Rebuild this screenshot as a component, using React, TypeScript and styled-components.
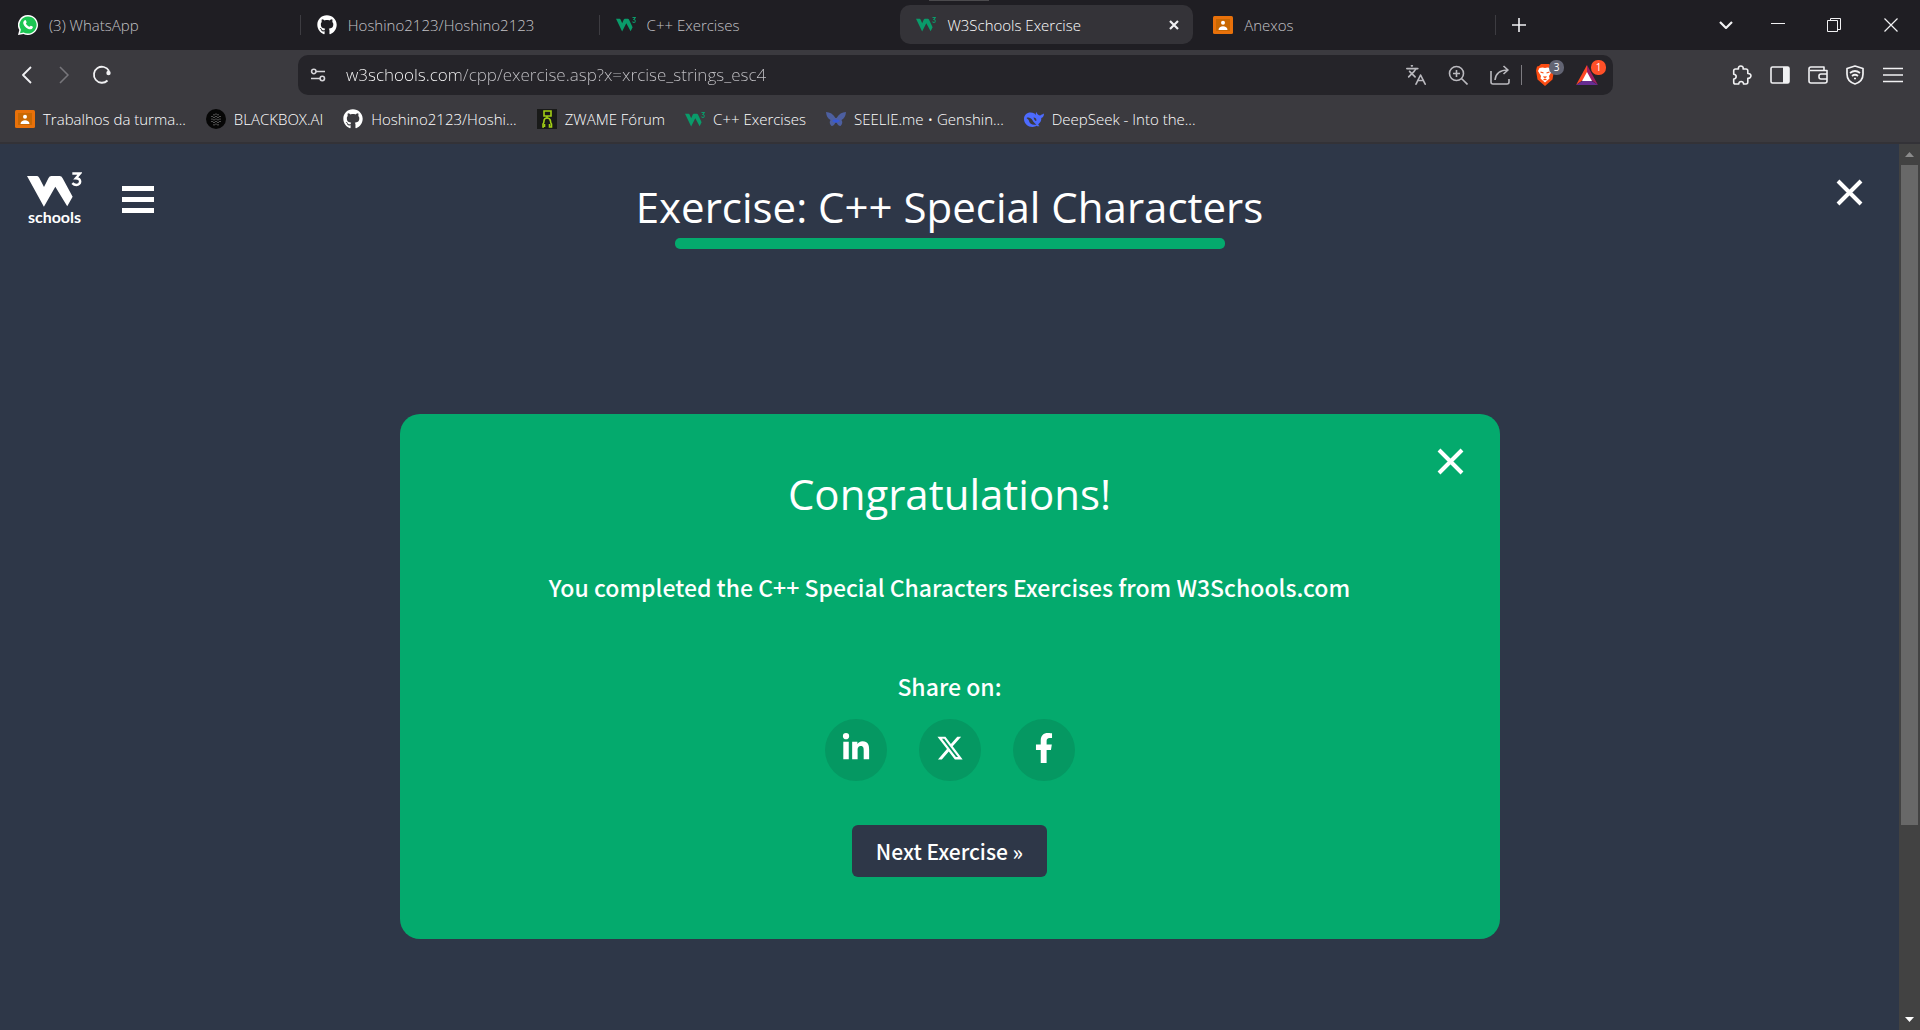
import React from "react";
import styled, { createGlobalStyle, css } from "styled-components";
import { FaLinkedinIn, FaFacebookF, FaGithub } from "react-icons/fa";
import { FaXTwitter } from "react-icons/fa6";
import { Languages } from "lucide-react";

const ui = `"Open Sans", "Noto Sans", sans-serif`;
const source = `"Noto Sans CJK JP", "Open Sans", sans-serif`;

const GlobalStyle = createGlobalStyle`
  *, *::before, *::after { box-sizing: border-box; }
  body { margin: 0; background: #2e3748; font-family: ${ui}; color: #fff; }
  button { border: 0; margin: 0; padding: 0; background: none; color: inherit; font: inherit; cursor: pointer; }
  a { color: inherit; text-decoration: none; }
  svg { display: block; flex: none; }
`;

const Window = styled.div`
  display: flex;
  flex-direction: column;
  height: 100vh;
  overflow: hidden;
`;

/* ---------- Tab strip ---------- */

const TabStrip = styled.nav`
  position: relative;
  display: flex;
  align-items: center;
  height: 50px;
  flex: none;
  padding-bottom: 1px;
  background: #1f1e23;
`;

const DragHandle = styled.span`
  position: absolute;
  top: 0;
  left: 929px;
  width: 60px;
  height: 1px;
  background: #4b4a4d;
`;

const Tabs = styled.div`
  display: grid;
  grid-template-columns: repeat(5, minmax(0, 1fr));
  flex: 0 1 1496px;
  min-width: 0;
  padding-left: 2px;
`;

const Tab = styled.div<{ $active?: boolean; $divided?: boolean }>`
  display: flex;
  align-items: center;
  min-width: 0;
  height: 39px;
  padding: 0 14px 0 16px;
  color: #c3c2c6;
  ${(p) =>
    p.$divided &&
    css`
      background: linear-gradient(#3d3c41, #3d3c41) right center / 1px 20px no-repeat;
    `}
  ${(p) =>
    p.$active &&
    css`
      margin: 0 4px 0 2px;
      border-radius: 10px;
      background: #343338;
      color: #fff;
    `}
`;

const TabLabel = styled.button`
  display: flex;
  align-items: center;
  gap: 11px;
  flex: 1;
  min-width: 0;
  text-align: left;
  font-size: 15px;
  font-weight: 300;
  line-height: 20px;
  white-space: nowrap;
`;

const IconButton = styled.button<{ $w: number; $tone?: string }>`
  display: flex;
  align-items: center;
  justify-content: center;
  flex: none;
  width: ${(p) => p.$w}px;
  height: 40px;
  color: ${(p) => p.$tone ?? "#f1f1f3"};
`;

const WindowControls = styled.div`
  display: flex;
  margin-left: auto;
`;

/* ---------- Toolbar ---------- */

const Toolbar = styled.div`
  display: flex;
  align-items: center;
  height: 50px;
  flex: none;
  background: #3b3a3f;
  padding: 0 9px;
`;

const NavButtons = styled.div`
  display: flex;
  flex: 0 0 289px;
`;

const AddressBar = styled.form`
  display: flex;
  align-items: center;
  flex: 0 1 1315px;
  min-width: 0;
  height: 40px;
  border-radius: 10px;
  background: #252429;
  padding: 0 5px 0 0;
`;

const AddressInput = styled.input`
  flex: 1;
  min-width: 0;
  margin-left: 8px;
  border: 0;
  padding: 0;
  outline: 0;
  background: linear-gradient(to right, #fff 114px, #c6c5c9 114px);
  background-clip: text;
  -webkit-background-clip: text;
  color: transparent;
  caret-color: #fff;
  font-family: inherit;
  font-size: 17px;
  font-weight: 300;
  line-height: 24px;
`;

const BarDivider = styled.span`
  width: 1px;
  height: 20px;
  margin-right: 2px;
  background: #7d7c81;
`;

const Badged = styled.button`
  position: relative;
  display: flex;
  align-items: center;
  justify-content: center;
  width: 42px;
  height: 40px;
`;

const Badge = styled.span<{ $bg: string }>`
  position: absolute;
  top: 5px;
  right: 2px;
  width: 15px;
  height: 15px;
  border-radius: 7px;
  background: ${(p) => p.$bg};
  color: #fff;
  font-size: 10px;
  line-height: 15px;
  text-align: center;
`;

const ToolbarActions = styled.div`
  display: flex;
  margin-left: auto;
`;

const Bookmarks = styled.nav`
  display: flex;
  align-items: center;
  gap: 20px;
  height: 44px;
  flex: none;
  padding: 0 15px 4px;
  background: #3b3a3f;
  border-bottom: 2px solid #333237;
`;

const Bookmark = styled.a`
  display: flex;
  align-items: center;
  gap: 8px;
  font-size: 15px;
  line-height: 20px;
  font-weight: 300;
  white-space: nowrap;
`;

/* ---------- Page ---------- */

const Viewport = styled.div`
  display: flex;
  flex: 1;
  min-height: 0;
`;

const Page = styled.main`
  flex: 1;
  min-width: 0;
  overflow: hidden;
`;

const Header = styled.header`
  display: grid;
  grid-template-columns: 200px 1fr 200px;
  align-items: start;
  padding: 28px 0 0;
`;

const Brand = styled.div`
  display: flex;
  align-items: center;
  gap: 40px;
  padding-left: 27px;
`;

const LogoLink = styled.a`
  display: flex;
  flex-direction: column;
  align-items: center;
  width: 55px;
  font-family: Lato, sans-serif;
  font-size: 16px;
  font-weight: 700;
  line-height: 18px;
`;

const MenuButton = styled.button`
  display: grid;
  gap: 6px;
  width: 32px;
`;

const MenuBar = styled.span`
  height: 5px;
  background: #fff;
`;

const TitleBlock = styled.div`
  display: flex;
  flex-direction: column;
  align-items: center;
  gap: 1px;
  padding-top: 5px;
`;

const Title = styled.h1`
  margin: 0;
  font-size: 42px;
  font-weight: 400;
  line-height: 60px;
  white-space: nowrap;
`;

const Progress = styled.div`
  width: 550px;
  height: 11px;
  border-radius: 5px;
  background: #04aa6d;
`;

const CloseButton = styled.button`
  justify-self: end;
  margin: 7px 36px 0 0;
`;

const Card = styled.section`
  position: relative;
  display: flex;
  flex-direction: column;
  align-items: center;
  width: 1100px;
  max-width: 90%;
  margin: 165px auto 0;
  padding: 50px 20px 62px;
  border-radius: 20px;
  background: #04aa6d;
  font-family: ${source};
  font-weight: 500;
  text-align: center;
`;

const CardClose = styled.button`
  position: absolute;
  top: 34px;
  right: 36px;
`;

const CardTitle = styled.h2`
  margin: 0 0 45px;
  font-family: ${ui};
  font-size: 42px;
  font-weight: 400;
  line-height: 60px;
`;

const Message = styled.p`
  margin: 0;
  font-size: 23px;
  line-height: 36px;
`;

const ShareLabel = styled(Message)`
  margin: 63px 0 15px;
`;

const ShareList = styled.div`
  display: flex;
  gap: 32px;
`;

const ShareLink = styled.a`
  display: flex;
  align-items: center;
  justify-content: center;
  width: 62px;
  height: 62px;
  padding-bottom: 4px;
  border-radius: 50%;
  background: #059862;
`;

const NextButton = styled.button`
  height: 52px;
  margin-top: 44px;
  padding: 0 24px;
  border-radius: 6px;
  background: #2e3748;
  font-size: 21px;
  line-height: 32px;
`;

const ScrollTrack = styled.div`
  display: flex;
  flex-direction: column;
  align-items: center;
  width: 21px;
  flex: none;
  background: #424242;
`;

const ScrollThumb = styled.div`
  width: 17px;
  flex: 0 0 660px;
  background: #686868;
`;

const ScrollArrow = styled.div`
  display: flex;
  align-items: center;
  height: 21px;
`;

const ScrollSpace = styled.div`
  flex: 1;
`;

/* ---------- Drawings ---------- */

const W3Icon = ({ w = 20, h = 15, color = "#0a9b6a" }: { w?: number; h?: number; color?: string }) => (
  <svg width={w} height={h} viewBox="0 0 54 35" fill="none" preserveAspectRatio="none">
    <path d="M0 4h10q1 0 2 1.500l4.700 9L21 6q1-2 3-2h8q2 0 3 2l9.800 18-5.300 9.300-11.700-19-11.200 19.500Z" fill={color} />
    <path d="M44.500 1.400h7.500l-4 4.600c6 0 5 6.700.5 6.700-2 0-3-.8-4-1.800" stroke={color} strokeWidth="2.400" />
  </svg>
);

const ClassroomIcon = () => (
  <svg width="20" height="18" viewBox="0 0 20 18">
    <rect width="20" height="18" rx="1.500" fill="#e8710a" />
    <rect x="3" y="3" width="14" height="12" fill="#c96802" />
    <circle cx="10" cy="6.800" r="2" fill="#fff" />
    <path d="M5.500 14c0-5 9-5 9 0Z" fill="#fff" />
  </svg>
);

const WhatsAppIcon = () => (
  <svg width="20" height="20" viewBox="0 0 20 20">
    <path d="M10 0a10 10 0 1 1-4.600 18.900L0 20l1.300-5A10 10 0 0 1 10 0Z" fill="#fff" />
    <path d="M10 1.400a8.600 8.600 0 1 1-4.400 16L2 18.200l.9-3.500A8.600 8.600 0 0 1 10 1.400Z" fill="#1bc552" />
    <path d="M6.700 5.300c.8-.6 1.300 0 1.900 1.800.2.700-.8 1.100-.6 1.600.8 1.500 1.900 2.400 3.400 3 .5.100 1-1.200 1.500-1 2.200 1 2.300 1.100 1.700 2.300-.8 1.400-2.700 1.700-5.200.4-3-1.600-6-5.800-2.700-8.100Z" fill="#fff" />
  </svg>
);

const BlackboxIcon = () => (
  <svg width="20" height="20" viewBox="0 0 20 20">
    <circle cx="10" cy="10" r="10" fill="#060606" />
    {[5, 7.5, 10, 12.5, 15].map((y, r) =>
      [6, 8, 10, 12, 14].map((x, c) =>
        (r === 0 || r === 4) && (c === 0 || c === 4) ? null : (
          <circle key={`${x}-${y}`} cx={x} cy={y + (c % 2 ? 0.8 : 0)} r="0.6" fill="#aaa" />
        )
      )
    )}
  </svg>
);

const ZwameIcon = () => (
  <svg width="20" height="20" viewBox="0 0 20 20" fill="none" stroke="#a2cf15" strokeWidth="1.600">
    <rect width="20" height="20" fill="#191a19" stroke="none" />
    <path d="M7 2h7v5H7ZM10 7v2M7 18H6v-3q1-1 1-3 0-3 3-3t3.500 3q0 2 1 3v3h-2v-3" />
    <path d="M7.500 18v-3" />
  </svg>
);

const ButterflyIcon = () => (
  <svg width="20" height="16" viewBox="0 0 20 16">
    <path d="M0 1q6 0 9.500 6h1Q14 1 20 1q-.5 6-4.500 8 2 3-1 6-3 0-4.500-5-1.500 5-4.500 5-3-3-1-6Q.5 7 0 1Z" fill="#4d5fa0" />
    <path d="M6 10q3-3 4-1 1-2 4 1l-4 2Z" fill="#3759d7" />
  </svg>
);

const DeepSeekIcon = () => (
  <svg width="20" height="16" viewBox="0 0 20 16">
    <path
      d="M10.500 2.500C5 0 0 3 0 8c0 4.500 4 8 8.500 8 2 0 3-.5 4-1.200 1 .7 2.500.7 3.200.2-1-.6-1.400-1-1.400-1.800C16.500 11.500 17.500 9.500 17.300 7c1.700-.3 2.700-2 2.700-4.500-1.200 1-2.700.7-3.700 2C14.500 4.500 13 3 12.500 1c-1.300 1.500-1 3.500.3 5l2.700 3"
      fill="#4d6bfe"
    />
    <path d="M2.500 7c2-1 4.500 0 6 2.200 1.300 2 2.300 3.300 4 4.300-3.500 1-7-.5-7.500-3.500C4.700 8.500 3.500 8 2.500 7ZM9.500 6.500c2.200 0 3.300 1.500 2.800 3.500-1.300 0-2.300-1.700-2.800-3.500Z" fill="#3b3a3f" />
  </svg>
);

const Line = ({ w, h, d, sw = 1.6 }: { w: number; h: number; d: string; sw?: number }) => (
  <svg width={w} height={h} viewBox={`0 0 ${w} ${h}`} fill="none" stroke="currentColor" strokeWidth={sw} strokeLinejoin="round">
    <path d={d} />
  </svg>
);

const BraveIcon = () => (
  <svg width="18" height="22" viewBox="0 0 18 22">
    <path d="M5 0h8l2 2 2 .5 1 4-1.500 9L9 22l-7.500-6.500L0 6.500l1-4L3 2Z" fill="#fb4c12" />
    <path d="m3.500 4 3-.5L9 4l2.500-.5 3 .5 1.500 3-3 5 .5 2.500L9 18.500 4.500 14.500 5 12 2 7Z" fill="#fff" />
    <path d="m4.500 8 3 1M13.500 8l-3 1M7.500 12.500 9 13.500l1.500-1M7.500 16l1.500-.8 1.500.8" stroke="#fb4c12" strokeWidth="1.200" fill="none" />
  </svg>
);

const BatIcon = () => (
  <svg width="22" height="20" viewBox="0 0 22 20">
    <path d="M11 0 0 20l11-8Z" fill="#ff4724" />
    <path d="m11 0 11 20-11-8Z" fill="#9e1f63" />
    <path d="m0 20 11-7 11 7Z" fill="#662d91" />
    <path d="m11 7-5 9h10Z" fill="#fff" />
  </svg>
);

const BigClose = () => (
  <svg width="27" height="27" viewBox="0 0 27 27" stroke="#fff" strokeWidth="4">
    <path d="m2 2 23 23M25 2 2 25" />
  </svg>
);

const barIcon = "#bab9be";

const bookmarks = [
  { label: "Trabalhos da turma...", icon: <ClassroomIcon /> },
  { label: "BLACKBOX.AI", icon: <BlackboxIcon /> },
  { label: "Hoshino2123/Hoshi...", icon: <FaGithub size={20} /> },
  { label: "ZWAME Fórum", icon: <ZwameIcon /> },
  { label: "C++ Exercises", icon: <W3Icon /> },
  { label: "SEELIE.me • Genshin...", icon: <ButterflyIcon /> },
  { label: "DeepSeek - Into the...", icon: <DeepSeekIcon /> },
];

const tabs = [
  { label: "(3) WhatsApp", icon: <WhatsAppIcon />, divided: true },
  { label: "Hoshino2123/Hoshino2123", icon: <FaGithub size={20} color="#fff" />, divided: true },
  { label: "C++ Exercises", icon: <W3Icon /> },
  { label: "W3Schools Exercise", icon: <W3Icon />, active: true },
  { label: "Anexos", icon: <ClassroomIcon />, divided: true },
];

export default function App() {
  return (
    <>
      <GlobalStyle />
      <Window>
        <TabStrip aria-label="Tabs">
          <DragHandle />
          <Tabs>
            {tabs.map((t) => (
              <Tab key={t.label} $active={t.active} $divided={t.divided}>
                <TabLabel>
                  {t.icon}
                  {t.label}
                </TabLabel>
                {t.active && (
                  <IconButton $w={10} aria-label="Close tab">
                    <Line w={10} h={10} d="m1 1 8 8M9 1 1 9" sw={2.2} />
                  </IconButton>
                )}
              </Tab>
            ))}
          </Tabs>
          <IconButton $w={46} aria-label="New tab">
            <Line w={14} h={14} d="M7 0v14M0 7h14" />
          </IconButton>
          <WindowControls>
            <IconButton $w={46} aria-label="Search tabs">
              <Line w={14} h={8} d="m1 1 6 6 6-6" sw={2.2} />
            </IconButton>
            <IconButton $w={57} aria-label="Minimize">
              <Line w={14} h={3} d="M0 .5h14" sw={1} />
            </IconButton>
            <IconButton $w={56} aria-label="Restore">
              <Line w={14} h={14} d="M.5 2.500h10v11H.5ZM3.500 2.500v-2h10v11h-3" sw={1} />
            </IconButton>
            <IconButton $w={58} aria-label="Close window">
              <Line w={14} h={14} d="m.5.5 13 13M13.500.5l-13 13" sw={1.2} />
            </IconButton>
          </WindowControls>
        </TabStrip>

        <Toolbar>
          <NavButtons>
            <IconButton $w={36} aria-label="Back">
              <Line w={10} h={18} d="M9 1 1 9l8 8" sw={1.8} />
            </IconButton>
            <IconButton $w={38} $tone="#77767b" aria-label="Forward">
              <Line w={10} h={18} d="m1 1 8 8-8 8" />
            </IconButton>
            <IconButton $w={38} aria-label="Reload">
              <svg width="20" height="20" viewBox="0 0 20 20" fill="none" stroke="currentColor" strokeWidth="1.800">
                <path d="M15.500 15.500A8 8 0 1 1 17 6" />
                <circle cx="16.500" cy="8" r="2.200" fill="currentColor" stroke="none" />
              </svg>
            </IconButton>
          </NavButtons>
          <AddressBar onSubmit={(e) => e.preventDefault()}>
            <IconButton type="button" $w={40} $tone="#d6d5d9" aria-label="Site information">
              <Line w={16} h={14} d="M6 3.500h9M10 10.500H1M6 3.500a2.200 2.200 0 1 1-4.400 0 2.200 2.200 0 0 1 4.400 0ZM14.500 10.500a2.200 2.200 0 1 1-4.400 0 2.200 2.200 0 0 1 4.400 0Z" />
            </IconButton>
            <AddressInput aria-label="Address" defaultValue="w3schools.com/cpp/exercise.asp?x=xrcise_strings_esc4" />
            <IconButton type="button" $w={42} $tone={barIcon} aria-label="Translate">
              <Languages size={22} strokeWidth={1.8} />
            </IconButton>
            <IconButton type="button" $w={42} $tone={barIcon} aria-label="Zoom">
              <Line w={20} h={20} d="M15.500 8.500a7 7 0 1 1-14 0 7 7 0 0 1 14 0ZM13.500 13.500l6 6M8.500 5v7M5 8.500h7" />
            </IconButton>
            <IconButton type="button" $w={42} $tone={barIcon} aria-label="Share">
              <Line w={20} h={20} d="M1 6v11q0 2 2 2h14q2 0 2-2v-3M5 15q1-10 13-10M13.500 1l4.500 4-4.500 4" />
            </IconButton>
            <BarDivider />
            <Badged type="button" aria-label="Brave Shields">
              <BraveIcon />
              <Badge $bg="#626473">3</Badge>
            </Badged>
            <Badged type="button" aria-label="Brave Rewards">
              <BatIcon />
              <Badge $bg="#ff5028">1</Badge>
            </Badged>
          </AddressBar>
          <ToolbarActions>
            <IconButton $w={38} aria-label="Extensions">
              <Line
                w={20}
                h={20}
                d="M3.500 4H6.500C6 1.800 7.200 1 8.800 1s2.800.8 2.300 3H14q1.800 0 1.800 1.800V8.500c4.200-.3 4.200 5 0 4.700V17q0 2-1.800 2H11.500c.3-3.400-5-3.400-4.700 0H3.500q-1.800 0-1.800-1.800V14c3.300-.2 3.300-4.600 0-4.800V5.800Q1.700 4 3.500 4Z"
              />
            </IconButton>
            <IconButton $w={38} aria-label="Side panel">
              <svg width="20" height="18" viewBox="0 0 20 18">
                <rect x="1" y="1" width="18" height="16" rx="1.500" fill="none" stroke="currentColor" strokeWidth="1.600" />
                <path d="M13 1h6v16h-6Z" fill="currentColor" />
              </svg>
            </IconButton>
            <IconButton $w={37} aria-label="Wallet">
              <Line w={20} h={18} d="M16 4.500V1H3Q1 1 1 3v12q0 2 2 2h14q2 0 2-2V4.500H2M19 8h-6q-2 0-2 2v1q0 2 2 2h6" />
            </IconButton>
            <IconButton $w={38} aria-label="VPN">
              <Line w={18} h={20} d="M9 1l8 2.500V9q0 7.500-8 10Q1 16.500 1 9V3.500ZM4 8q5-4 10 0M6 11q3-2.500 6 0M8 13.500h2" sw={1.7} />
            </IconButton>
            <IconButton $w={37} aria-label="Menu">
              <Line w={20} h={16} d="M0 1.500h20M0 8h20M0 14.500h20" />
            </IconButton>
          </ToolbarActions>
        </Toolbar>

        <Bookmarks aria-label="Bookmarks">
          {bookmarks.map((b) => (
            <Bookmark key={b.label} href="#">
              {b.icon}
              {b.label}
            </Bookmark>
          ))}
        </Bookmarks>

        <Viewport>
          <Page>
            <Header>
              <Brand>
                <LogoLink href="#">
                  <W3Icon w={55} h={36} color="#fff" />
                  schools
                </LogoLink>
                <MenuButton aria-label="Open menu">
                  <MenuBar />
                  <MenuBar />
                  <MenuBar />
                </MenuButton>
              </Brand>
              <TitleBlock>
                <Title>Exercise: C++ Special Characters</Title>
                <Progress role="progressbar" aria-label="Progress" aria-valuenow={100} />
              </TitleBlock>
              <CloseButton aria-label="Close exercise">
                <BigClose />
              </CloseButton>
            </Header>

            <Card>
              <CardClose aria-label="Close message">
                <BigClose />
              </CardClose>
              <CardTitle>Congratulations!</CardTitle>
              <Message>You completed the C++ Special Characters Exercises from W3Schools.com</Message>
              <ShareLabel>Share on:</ShareLabel>
              <ShareList>
                <ShareLink href="#" aria-label="LinkedIn">
                  <FaLinkedinIn size={30} />
                </ShareLink>
                <ShareLink href="#" aria-label="X">
                  <FaXTwitter size={28} />
                </ShareLink>
                <ShareLink href="#" aria-label="Facebook">
                  <FaFacebookF size={30} />
                </ShareLink>
              </ShareList>
              <NextButton>Next Exercise »</NextButton>
            </Card>
          </Page>
          <ScrollTrack>
            <ScrollArrow>
              <svg width="9" height="5" viewBox="0 0 9 5">
                <path d="M0 5 4.500 0 9 5Z" fill="#8b8b8b" />
              </svg>
            </ScrollArrow>
            <ScrollThumb />
            <ScrollSpace />
            <ScrollArrow>
              <svg width="9" height="5" viewBox="0 0 9 5">
                <path d="M0 0h9L4.500 5Z" fill="#fff" />
              </svg>
            </ScrollArrow>
          </ScrollTrack>
        </Viewport>
      </Window>
    </>
  );
}
